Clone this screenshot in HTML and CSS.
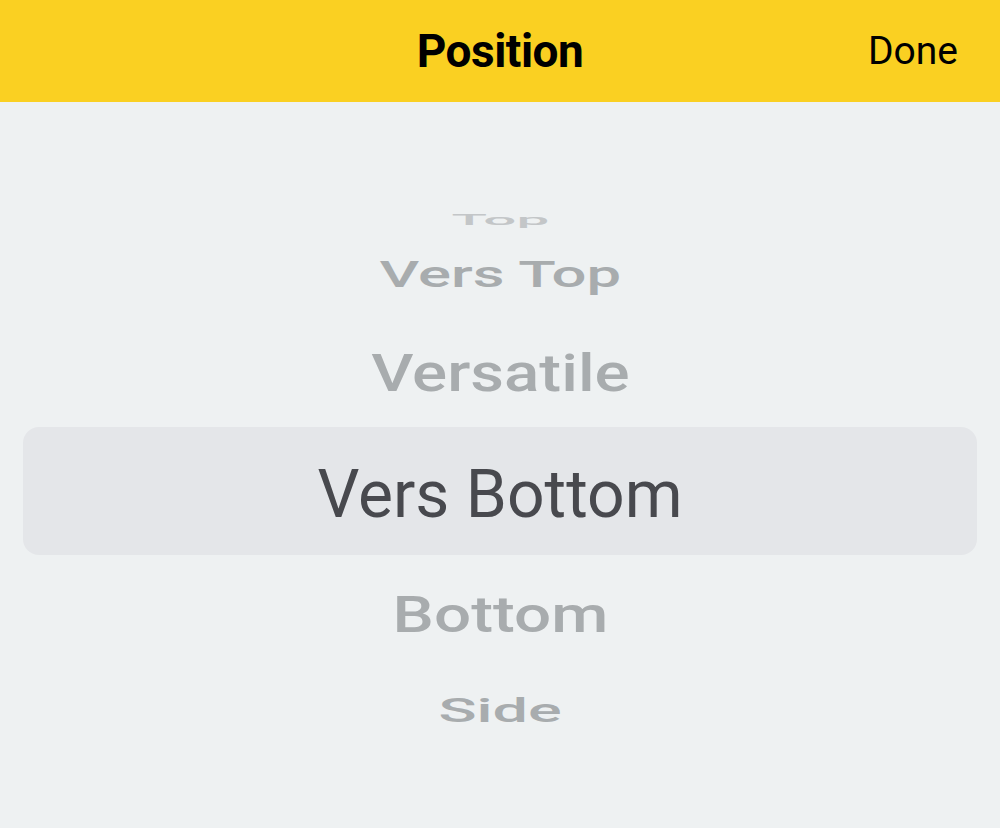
FILE: index.html
```html
<!DOCTYPE html>
<html>
<head>
<meta charset="utf-8">
<link rel="stylesheet" href="styles.css">
</head>
<body>
<div class="screen">
  <header class="bar">
    <div class="bar-side"></div>
    <h1 class="title">Position</h1>
    <div class="bar-side right"><span class="done">Done</span></div>
  </header>
  <main class="wheel">
    <div class="row r-top"><span class="t">Top</span></div>
    <div class="row r-verstop"><span class="t">Vers Top</span></div>
    <div class="row r-versatile"><span class="t">Versatile</span></div>
    <div class="row r-sel"><span class="t">Vers Bottom</span></div>
    <div class="row r-bottom"><span class="t">Bottom</span></div>
    <div class="row r-side"><span class="t">Side</span></div>
  </main>
</div>
</body>
</html>
```

FILE: styles.css
```css
html, body {
  margin: 0;
  padding: 0;
}
body {
  width: 1000px;
  height: 828px;
  background: #eef1f2;
  font-family: "Roboto", "Noto Sans", sans-serif;
  overflow: hidden;
}
.screen {
  display: flex;
  flex-direction: column;
  height: 828px;
}
.bar {
  height: 102px;
  background: #fad022;
  display: flex;
  align-items: center;
  padding: 0 42px 0 42px;
}
.bar-side {
  flex: 1;
  display: flex;
}
.bar-side.right {
  justify-content: flex-end;
}
.title {
  margin: 0;
  font-size: 46px;
  font-weight: 700;
  color: #000;
  letter-spacing: -0.5px;
}
.done {
  font-size: 39px;
  font-weight: 400;
  color: #000;
}
.wheel {
  display: flex;
  flex-direction: column;
  padding-top: 98px;
}
.row {
  display: flex;
  align-items: center;
  justify-content: center;
  color: #a8acae;
  white-space: nowrap;
}
.t {
  display: inline-block;
}
.r-top {
  height: 40px;
  color: #c3c6c8;
}
.r-top .t {
  font-size: 34px;
  font-weight: 500;
  transform: scale(1.72, 0.44);
}
.r-verstop {
  height: 60px;
  margin-top: 5px;
}
.r-verstop .t {
  font-size: 44px;
  font-weight: 500;
  transform: scale(1.4, 0.82);
}
.r-versatile {
  height: 80px;
  margin-top: 28px;
}
.r-versatile .t {
  font-size: 58px;
  font-weight: 500;
  transform: scale(1.13, 0.88);
}
.r-sel {
  height: 128px;
  margin: 14px 23px 0 23px;
  background: #e4e6e9;
  border-radius: 16px;
  color: #48494e;
}
.r-sel .t {
  font-size: 66px;
  font-weight: 400;
  transform: translateY(3px);
}
.r-bottom {
  height: 80px;
  margin-top: 20px;
}
.r-bottom .t {
  font-size: 58px;
  font-weight: 500;
  transform: scale(1.13, 0.86);
}
.r-side {
  height: 60px;
  margin-top: 26px;
}
.r-side .t {
  font-size: 44px;
  font-weight: 500;
  transform: scale(1.43, 0.76);
}
```
